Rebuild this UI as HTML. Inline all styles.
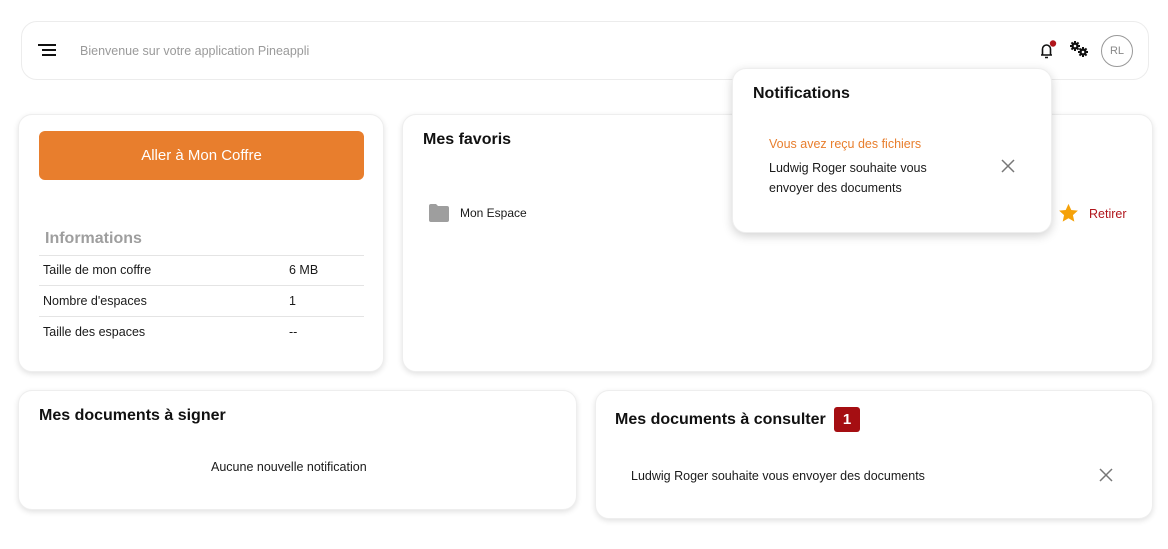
<!DOCTYPE html>
<html><head><meta charset="utf-8"><style>
*{box-sizing:border-box;margin:0;padding:0}
body{width:1168px;height:549px;background:#fff;font-family:"Liberation Sans",sans-serif;position:relative;overflow:hidden;color:#1a1a1a}
.abs{position:absolute}
.card{position:absolute;background:#fff;border-radius:14px;box-shadow:0 2px 6px rgba(0,0,0,.12);border:1px solid #eee}
.t{position:absolute;white-space:nowrap;line-height:1}
h3{position:absolute;font-size:16px;font-weight:bold;white-space:nowrap;line-height:1;color:#111}
.line{position:absolute;height:1px;background:#e4e4e4}
</style></head><body>
<div class="abs" style="left:21px;top:21px;width:1128px;height:59px;border:1px solid #ececec;border-radius:16px"></div>
<svg class="abs" style="left:38px;top:44px" width="20" height="14"><rect x="0" y="0" width="18" height="2" fill="#111"/><rect x="4" y="5" width="14" height="2" fill="#111"/><rect x="4" y="10" width="14" height="2" fill="#111"/></svg>
<div class="t" style="left:80px;top:45px;font-size:12.5px;color:#9a9a9a">Bienvenue sur votre application Pineappli</div>
<svg class="abs" style="left:1037px;top:40px" width="22" height="20" viewBox="0 0 22 20"><path d="M4 15h11M5.5 15V9a4 4 0 0 1 8 0v6M8 17.5h3" fill="none" stroke="#111" stroke-width="1.6"/><circle cx="16" cy="3.5" r="3.2" fill="#b0151b"/></svg>
<svg class="abs" style="left:1068px;top:40px" width="22" height="18" viewBox="0 0 22 18">
<g fill="#111"><circle cx="7" cy="6" r="3.6"/><rect x="6" y="1" width="2" height="10"/><rect x="2" y="5" width="10" height="2"/><rect x="6" y="1" width="2" height="10" transform="rotate(45 7 6)"/><rect x="6" y="1" width="2" height="10" transform="rotate(-45 7 6)"/></g>
<circle cx="7" cy="6" r="1.3" fill="#fff"/>
<g fill="#111"><circle cx="15" cy="12" r="3.6"/><rect x="14" y="7" width="2" height="10"/><rect x="10" y="11" width="10" height="2"/><rect x="14" y="7" width="2" height="10" transform="rotate(45 15 12)"/><rect x="14" y="7" width="2" height="10" transform="rotate(-45 15 12)"/></g>
<circle cx="15" cy="12" r="1.3" fill="#fff"/></svg>
<div class="abs" style="left:1101px;top:35px;width:32px;height:32px;border:1px solid #999;border-radius:50%;font-size:11px;color:#888;text-align:center;line-height:30px">RL</div>

<div class="card" style="left:18px;top:114px;width:366px;height:258px"></div>
<div class="abs" style="left:39px;top:131px;width:325px;height:49px;background:#e87e2d;border-radius:6px;color:#fff;font-size:15px;text-align:center;line-height:50px">Aller à Mon Coffre</div>
<div class="t" style="left:45px;top:231px;font-size:16px;font-weight:bold;color:#9e9e9e">Informations</div>
<div class="line" style="top:255px;left:39px;width:325px"></div>
<div class="line" style="top:285px;left:39px;width:325px"></div>
<div class="line" style="top:316px;left:39px;width:325px"></div>
<div class="t" style="left:43px;top:264px;font-size:12.5px">Taille de mon coffre</div><div class="t" style="left:289px;top:264px;font-size:12.5px">6 MB</div>
<div class="t" style="left:43px;top:295px;font-size:12.5px">Nombre d'espaces</div><div class="t" style="left:289px;top:295px;font-size:12.5px">1</div>
<div class="t" style="left:43px;top:326px;font-size:12.5px">Taille des espaces</div><div class="t" style="left:289px;top:326px;font-size:12.5px">--</div>

<div class="card" style="left:402px;top:114px;width:751px;height:258px"></div>
<h3 style="left:423px;top:132px">Mes favoris</h3>
<svg class="abs" style="left:429px;top:204px" width="20" height="18" viewBox="0 0 20 18"><path d="M0 2a2 2 0 0 1 2-2h5l2 2h9a2 2 0 0 1 2 2v12a2 2 0 0 1-2 2H2a2 2 0 0 1-2-2z" fill="#9e9e9e"/></svg>
<div class="t" style="left:460px;top:207px;font-size:12px">Mon Espace</div>
<svg class="abs" style="left:1058px;top:203px" width="21" height="20" viewBox="0 0 24 23"><path d="M12 1l3.2 7 7.6.8-5.7 5.1 1.6 7.5L12 17.6 5.3 21.4l1.6-7.5L1.2 8.8 8.8 8z" fill="#f5a20a"/></svg>
<div class="t" style="left:1089px;top:208px;font-size:12.5px;color:#b0151b">Retirer</div>

<div class="card" style="left:18px;top:390px;width:559px;height:120px"></div>
<h3 style="left:39px;top:408px">Mes documents à signer</h3>
<div class="t" style="left:211px;top:461px;font-size:12.5px">Aucune nouvelle notification</div>

<div class="card" style="left:595px;top:390px;width:558px;height:129px"></div>
<h3 style="left:615px;top:412px">Mes documents à consulter</h3>
<div class="abs" style="left:834px;top:407px;width:26px;height:25px;background:#a50e12;border-radius:3px;color:#fff;font-weight:bold;font-size:15px;text-align:center;line-height:25px">1</div>
<div class="t" style="left:631px;top:470px;font-size:12.5px">Ludwig Roger souhaite vous envoyer des documents</div>
<svg class="abs" style="left:1099px;top:468px" width="14" height="14"><path d="M1 1l12 12M13 1L1 13" stroke="#777" stroke-width="1.5"/></svg>

<div class="abs" style="left:732px;top:68px;width:320px;height:165px;background:#fff;border-radius:14px;box-shadow:0 3px 10px rgba(0,0,0,.18);border:1px solid #eee"></div>
<h3 style="left:753px;top:86px">Notifications</h3>
<div class="t" style="left:769px;top:138px;font-size:12.5px;color:#e87e2d">Vous avez reçu des fichiers</div>
<div class="t" style="left:769px;top:162px;font-size:12.5px">Ludwig Roger souhaite vous</div>
<div class="t" style="left:769px;top:182px;font-size:12.5px">envoyer des documents</div>
<svg class="abs" style="left:1001px;top:159px" width="14" height="14"><path d="M1 1l12 12M13 1L1 13" stroke="#777" stroke-width="1.5"/></svg>
</body></html>
